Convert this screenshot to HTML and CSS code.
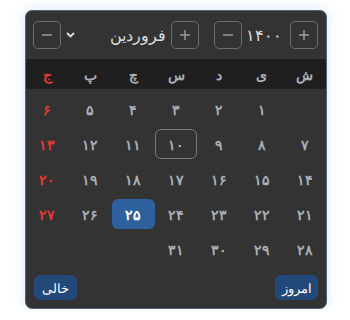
FILE: index.html
```html
<!DOCTYPE html>
<html lang="fa" dir="rtl">
<head>
  <meta charset="utf-8">
  <title>تقویم</title>
  <link rel="stylesheet" href="styles.css">
</head>
<body>
  <div class="datepicker">
    <div class="dp-header">
      <div class="dp-group">
        <button class="dp-btn" aria-label="سال بعد">
          <svg width="12" height="12" viewBox="0 0 12 12"><path d="M6 1v10M1 6h10"/></svg>
        </button>
        <span class="dp-year">۱۴۰۰</span>
        <button class="dp-btn" aria-label="سال قبل">
          <svg width="12" height="12" viewBox="0 0 12 12"><path d="M1 6h10"/></svg>
        </button>
      </div>
      <div class="dp-group month-group">
        <button class="dp-btn" aria-label="ماه بعد">
          <svg width="12" height="12" viewBox="0 0 12 12"><path d="M6 1v10M1 6h10"/></svg>
        </button>
        <div class="dp-month">
          <span>فروردین</span>
          <svg class="chevron" width="9" height="6" viewBox="0 0 9 6"><path d="M1 1l3.5 3.5L8 1"/></svg>
        </div>
        <button class="dp-btn" aria-label="ماه قبل">
          <svg width="12" height="12" viewBox="0 0 12 12"><path d="M1 6h10"/></svg>
        </button>
      </div>
    </div>

    <div class="dp-weekdays">
      <span>ش</span><span>ی</span><span>د</span><span>س</span><span>چ</span><span>پ</span><span class="holiday">ج</span>
    </div>

    <div class="dp-days">
      <span></span><span>۱</span><span>۲</span><span>۳</span><span>۴</span><span>۵</span><span class="holiday">۶</span>
      <span>۷</span><span>۸</span><span>۹</span><span class="today">۱۰</span><span>۱۱</span><span>۱۲</span><span class="holiday">۱۳</span>
      <span>۱۴</span><span>۱۵</span><span>۱۶</span><span>۱۷</span><span>۱۸</span><span>۱۹</span><span class="holiday">۲۰</span>
      <span>۲۱</span><span>۲۲</span><span>۲۳</span><span>۲۴</span><span class="selected">۲۵</span><span>۲۶</span><span class="holiday">۲۷</span>
      <span>۲۸</span><span>۲۹</span><span>۳۰</span><span>۳۱</span><span></span><span></span><span></span>
    </div>

    <div class="dp-footer">
      <button class="dp-action">امروز</button>
      <button class="dp-action">خالی</button>
    </div>
  </div>
</body>
</html>
```

FILE: styles.css
```css
/* Page */
body {
    margin: 0;
    padding: 10px 23px 0 0;
    background-color: #fff;
    font-family: 'Noto Sans', sans-serif;
}

/* Calendar card */
.datepicker {
    width: 300px;
    background-color: #333;
    border: 1px solid #55657a;
    border-radius: 7px;
    overflow: hidden;
    box-shadow: 0 0 12px rgba(110, 160, 240, 0.3);
}

/* Header with year and month controls */
.dp-header {
    display: flex;
    align-items: center;
    gap: 15px;
    height: 48px;
    padding: 0 8px;
}

.dp-group {
    display: flex;
    align-items: center;
    gap: 8px;
}

.month-group {
    gap: 5px;
}

.dp-btn {
    display: flex;
    align-items: center;
    justify-content: center;
    width: 28px;
    height: 28px;
    padding: 0;
    background: transparent;
    border: 1px solid #6c6c6c;
    border-radius: 5px;
    cursor: pointer;
}

.dp-btn svg path {
    stroke: #9a9a9a;
    stroke-width: 1.5;
    fill: none;
}

.dp-year {
    width: 32px;
    font-size: 16px;
    color: #dcdcdc;
    text-align: right;
}

.dp-month {
    display: flex;
    align-items: center;
    justify-content: space-between;
    width: 100px;
    font-size: 16px;
    color: #dcdcdc;
}

.chevron path {
    stroke: #e0e0e0;
    stroke-width: 1.8;
    fill: none;
}

/* Weekday names */
.dp-weekdays {
    display: grid;
    grid-template-columns: repeat(7, 1fr);
    height: 30px;
    align-items: center;
    background-color: #1f1f1f;
    font-size: 14px;
    font-weight: bold;
    color: #a9b0b8;
    text-align: center;
}

/* Day cells */
.dp-days {
    display: grid;
    grid-template-columns: repeat(7, 1fr);
    grid-auto-rows: 30px;
    row-gap: 5px;
    padding-top: 5px;
    font-size: 14px;
    font-weight: bold;
    color: #a9b0b8;
    text-align: center;
}

.dp-days span {
    display: flex;
    align-items: center;
    justify-content: center;
    border-radius: 6px;
}

.holiday {
    color: #e53935;
}

.dp-days .today {
    border: 1px solid #7a7a7a;
}

.dp-days .selected {
    background-color: #2e609e;
    color: #fff;
}

/* Footer buttons */
.dp-footer {
    display: flex;
    justify-content: space-between;
    padding: 11px 8px 8px;
}

.dp-action {
    width: 43px;
    height: 25px;
    padding: 0;
    background-color: #23487a;
    color: #fff;
    font-family: 'Noto Sans', sans-serif;
    font-size: 13px;
    border: none;
    border-radius: 6px;
    cursor: pointer;
}
```
